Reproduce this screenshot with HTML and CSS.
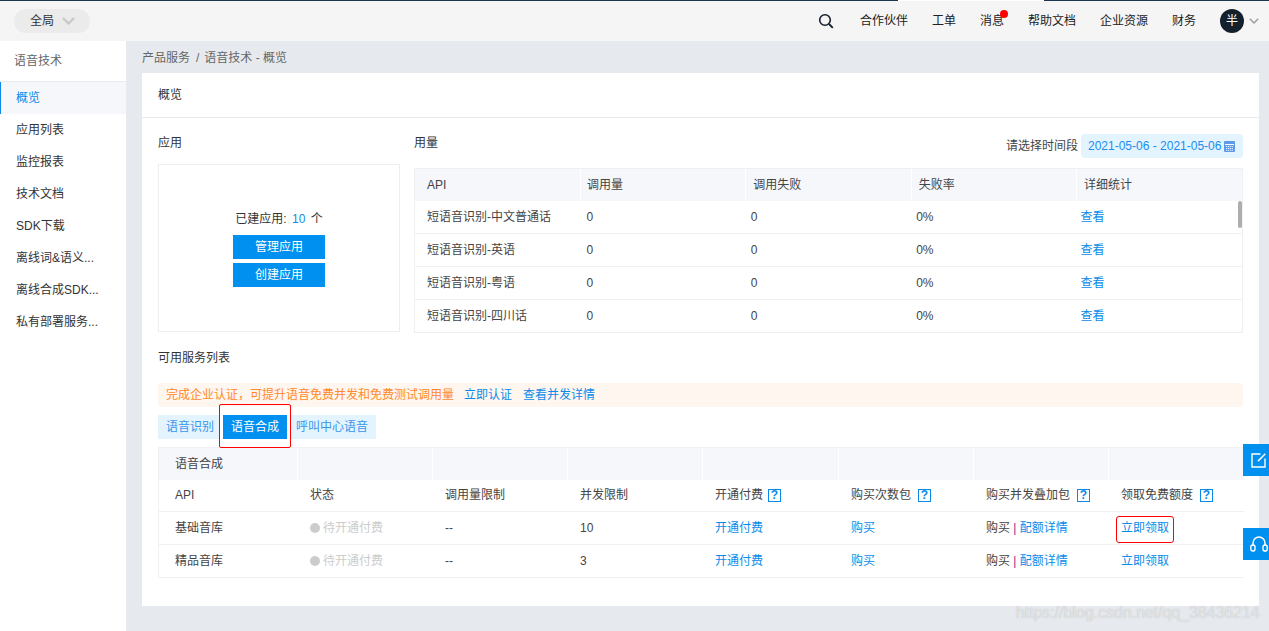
FILE: index.html
```html
<!DOCTYPE html>
<html lang="zh-CN">
<head>
<meta charset="utf-8">
<title>语音技术 - 概览</title>
<link rel="stylesheet" href="styles.css">
</head>
<body>
<div class="app">
  <header class="topbar">
    <div class="scope"><span>全局</span><svg class="scope-arrow" width="13" height="8" viewBox="0 0 13 8"><path d="M1 1l5.500 5.500L12 1" fill="none" stroke="#c9c9c9" stroke-width="2.400"/></svg></div>
    <nav class="topnav">
      <svg class="search" width="16" height="16" viewBox="0 0 16 16"><circle cx="7" cy="7" r="5.300" fill="none" stroke="#15202b" stroke-width="1.600"/><path d="M11 11l3.800 3.800" stroke="#15202b" stroke-width="1.800"/></svg>
      <a class="nav-link">合作伙伴</a>
      <a class="nav-link">工单</a>
      <a class="nav-link msg">消息<i class="dot"></i></a>
      <a class="nav-link">帮助文档</a>
      <a class="nav-link">企业资源</a>
      <a class="nav-link">财务</a>
      <div class="user"><span class="avatar">半</span><svg width="10" height="6" viewBox="0 0 10 6"><path d="M.8.800L5 5 9.200.800" fill="none" stroke="#9a9a9a" stroke-width="1.400"/></svg></div>
    </nav>
  </header>
  <div class="layout">
    <aside class="sidebar">
      <div class="side-title">语音技术</div>
      <ul class="side-menu">
        <li class="active">概览</li>
        <li>应用列表</li>
        <li>监控报表</li>
        <li>技术文档</li>
        <li>SDK下载</li>
        <li>离线词&amp;语义...</li>
        <li>离线合成SDK...</li>
        <li>私有部署服务...</li>
      </ul>
    </aside>
    <main class="main">
      <div class="crumb">产品服务<span class="sep">/</span>语音技术 - 概览</div>
      <section class="card">
        <h1 class="card-head">概览</h1>
        <div class="card-body">
          <div class="top-row">
            <div class="apps">
              <h2 class="sec-title">应用</h2>
              <div class="app-box">
                <p class="app-count">已建应用: <b>10</b> 个</p>
                <button class="btn">管理应用</button>
                <button class="btn">创建应用</button>
              </div>
            </div>
            <div class="usage">
              <div class="usage-head">
                <h2 class="sec-title">用量</h2>
                <div class="date-wrap">请选择时间段
                  <span class="date">2021-05-06 - 2021-05-06
                    <svg width="11" height="11" viewBox="0 0 11 11"><rect width="11" height="11" rx="1" fill="#5b9bea"/><path d="M1 3.500h9" stroke="#fff"/><path d="M2 5.500h7M2 7.500h7M2 9.300h7" stroke="#fff" stroke-width=".8" stroke-dasharray="1.400 .6"/></svg>
                  </span>
                </div>
              </div>
              <div class="usage-table">
                <table class="tbl">
                  <thead><tr><th>API</th><th>调用量</th><th>调用失败</th><th>失败率</th><th>详细统计</th></tr></thead>
                  <tbody>
                    <tr class="first"><td>短语音识别-中文普通话</td><td>0</td><td>0</td><td>0%</td><td><a>查看</a></td></tr>
                    <tr><td>短语音识别-英语</td><td>0</td><td>0</td><td>0%</td><td><a>查看</a></td></tr>
                    <tr><td>短语音识别-粤语</td><td>0</td><td>0</td><td>0%</td><td><a>查看</a></td></tr>
                    <tr><td>短语音识别-四川话</td><td>0</td><td>0</td><td>0%</td><td><a>查看</a></td></tr>
                  </tbody>
                </table>
                <i class="scroll-thumb"></i>
              </div>
            </div>
          </div>
          <h2 class="sec-title list-title">可用服务列表</h2>
          <div class="notice"><span class="warn">完成企业认证，可提升语音免费并发和免费测试调用量</span><a>立即认证</a><a>查看并发详情</a></div>
          <div class="tabs">
            <span class="tab first-tab">语音识别</span>
            <span class="tab on">语音合成</span>
            <span class="tab last-tab">呼叫中心语音</span>
          </div>
          <div class="svc">
            <table class="svc-tbl">
              <thead>
                <tr class="svc-head"><th>语音合成</th><th></th><th></th><th></th><th></th><th></th><th></th><th></th></tr>
              </thead>
              <tbody>
                <tr class="svc-cols"><td>API</td><td>状态</td><td>调用量限制</td><td>并发限制</td><td>开通付费<i class="q">?</i></td><td>购买次数包<i class="q">?</i></td><td>购买并发叠加包<i class="q">?</i></td><td>领取免费额度<i class="q">?</i></td></tr>
                <tr><td>基础音库</td><td class="off"><i class="off-dot"></i>待开通付费</td><td>--</td><td>10</td><td><a>开通付费</a></td><td><a>购买</a></td><td>购买 <em>|</em> <a>配额详情</a></td><td><a class="marked">立即领取</a></td></tr>
                <tr><td>精品音库</td><td class="off"><i class="off-dot"></i>待开通付费</td><td>--</td><td>3</td><td><a>开通付费</a></td><td><a>购买</a></td><td>购买 <em>|</em> <a>配额详情</a></td><td><a>立即领取</a></td></tr>
              </tbody>
            </table>
          </div>
        </div>
      </section>
    </main>
  </div>
  <a class="float edit"><svg width="15" height="15" viewBox="0 0 15 15"><path d="M9.500 1H1v13h13V5.500" fill="none" stroke="#fff" stroke-width="1.400"/><path d="M14.300.8L7 8.100" stroke="#fff" stroke-width="1.500"/></svg></a>
  <a class="float phone"><svg width="18" height="16" viewBox="0 0 18 16"><path d="M3 10V7a6 6 0 0 1 12 0v3" fill="none" stroke="#fff" stroke-width="1.500"/><rect x=".8" y="9" width="4.200" height="6" rx="2.100" fill="none" stroke="#fff" stroke-width="1.400"/><rect x="13" y="9" width="4.200" height="6" rx="2.100" fill="none" stroke="#fff" stroke-width="1.400"/></svg></a>
  <div class="watermark">https://blog.csdn.net/qq_38436214</div>
</div>
</body>
</html>
```
FILE: styles.css
```css
*, *::before, *::after { box-sizing: border-box; }
html, body { margin: 0; height: 100%; overflow: hidden; }
body { font: 12px/1.500 "Liberation Sans", "Noto Sans CJK SC", sans-serif; color: #333; }
h1, h2, p, ul { margin: 0; padding: 0; font-weight: normal; }
a { color: #0a8bea; }
i, em { font-style: normal; }
.app { position: relative; width: 1269px; height: 631px; overflow: hidden; background: #e6eaee; }

.topbar { position: relative; height: 41px; display: flex; align-items: center; justify-content: space-between; padding: 0 10px 0 14px; background: #f5f5f5; border-top: 1px solid #1c3552; }
.topbar::before { content: ""; position: absolute; left: 898px; top: -1px; width: 146px; height: 1px; background: #fff; }
.scope { width: 76px; height: 24px; display: flex; align-items: center; gap: 8px; padding-left: 16px; background: #ebebeb; border-radius: 12px; color: #333; }
.topnav { display: flex; align-items: center; }
.search { margin-right: 26px; }
.nav-link { position: relative; color: #222; margin-right: 24px; }
.dot { position: absolute; top: -2px; right: -4px; width: 8px; height: 8px; border-radius: 50%; background: #f00; }
.user { display: flex; align-items: center; gap: 5px; }
.avatar { width: 24px; height: 24px; display: flex; align-items: center; justify-content: center; border-radius: 50%; background: #14202c; color: #fff; }

.layout { display: flex; height: 590px; }
.sidebar { flex: none; width: 126px; background: #fff; }
.side-title { height: 41px; line-height: 40px; padding-left: 14px; color: #666; border-bottom: 1px solid #e8ebef; }
.side-menu { list-style: none; }
.side-menu li { height: 32px; line-height: 32px; padding-left: 16px; color: #333; }
.side-menu .active { color: #0a8bea; background: #f5f7fb; border-left: 1px solid #0a8bea; padding-left: 15px; }

.main { flex: 1; min-width: 0; padding-left: 16px; padding-right: 10px; }
.crumb { height: 32px; line-height: 35px; color: #666; }
.sep { margin: 0 5px 0 6px; }
.card { height: 533px; background: #fff; }
.card-head { height: 45px; line-height: 45px; padding-left: 16px; font-size: 12px; color: #333; border-bottom: 1px solid #e9ebee; }
.card-body { padding: 0 16px; }
.top-row { display: flex; gap: 14px; }
.sec-title { font-size: 12px; color: #333; }
.apps { width: 242px; padding-top: 16px; }
.app-box { height: 168px; margin-top: 12px; border: 1px solid #eee; display: flex; flex-direction: column; align-items: center; padding-top: 45px; }
.app-count { margin-bottom: 7px; color: #333; }
.app-count b { font-weight: normal; color: #0a8bea; margin: 0 2px; }
.btn { width: 92px; height: 24px; margin-bottom: 4px; border: 0; padding: 0; background: #0091f0; color: #fff; font: inherit; }
.usage { width: 829px; }
.usage-head { height: 50px; display: flex; justify-content: space-between; padding-top: 16px; }
.date-wrap { display: flex; align-items: flex-start; gap: 3px; color: #444; line-height: 24px; }
.date { width: 162px; height: 24px; display: flex; align-items: center; gap: 3px; padding-left: 7px; background: #e3f4ff; border-radius: 4px; color: #1a8cf0; }
.usage-table { position: relative; height: 165px; overflow: hidden; border: 1px solid #eef0f4; border-bottom-color: #eee; }
.tbl { width: 100%; border-collapse: collapse; table-layout: fixed; }
.tbl th { height: 32px; text-align: left; font-weight: normal; background: #f5f7fb; padding: 0 0 0 12px; border-right: 1px solid #fff; color: #444; }
.tbl th:nth-child(n+2) { padding-left: 7px; }
.tbl th:nth-child(2) { padding-left: 6px; }
.tbl th:last-child { border-right: 0; }
.tbl td { height: 33px; padding: 0 0 0 12px; border-bottom: 1px solid #eef0f4; color: #444; }
.tbl td:nth-child(2) { padding-left: 6px; }
.tbl td:nth-child(n+3) { padding-left: 5px; }
.tbl td:nth-child(5) { padding-left: 4px; }
.tbl .first td { height: 32px; }
.scroll-thumb { position: absolute; top: 32px; right: 0; width: 4px; height: 27px; border-radius: 2px; background: #adadad; }

.list-title { margin-top: 16px; }
.notice { height: 24px; margin-top: 16px; padding-left: 8px; display: flex; align-items: center; gap: 10px; background: #fff6f0; border-radius: 3px; }
.notice .warn { color: #ff8a2b; }
.notice a + a { margin-left: 1px; }
.tabs { display: flex; margin-top: 8px; height: 24px; }
.tab { line-height: 24px; background: #e3f4ff; color: #3a96ea; }
.first-tab { padding: 0 5px 0 8px; }
.last-tab { padding: 0 8px 0 5px; }
.tab.on { position: relative; width: 64px; margin: 0 4px; text-align: center; background: #0091f0; color: #fff; }
.tab.on::after { content: ""; position: absolute; left: -4px; top: -11px; width: 72px; height: 44px; border: 1px solid #f00; border-radius: 2px; }
.svc { width: 1086px; margin-top: 8px; border-left: 1px solid #eef0f4; border-top: 1px solid #eef0f4; }
.svc-tbl { width: 1085px; border-collapse: collapse; table-layout: fixed; }
.svc-head th { width: 135px; height: 32px; background: #f5f7fb; text-align: left; font-weight: normal; padding: 0 0 0 13px; border-right: 1px solid #fff; color: #444; }
.svc-head th:first-child { width: 138px; padding-left: 16px; }
.svc-head th:nth-child(5), .svc-head th:last-child { width: 136px; }
.svc-tbl td { height: 33px; padding: 0 0 0 13px; border-bottom: 1px solid #eef0f4; color: #444; white-space: nowrap; }
.svc-tbl td:first-child { padding-left: 16px; }
.svc-tbl .svc-cols td { height: 31px; }
.off { color: #ccc !important; }
.off-dot { display: inline-block; width: 10px; height: 10px; margin-right: 3px; border-radius: 50%; background: #ccc; vertical-align: -1px; }
.q { display: inline-block; width: 13px; height: 13px; margin-left: 7px; line-height: 11px; text-align: center; border: 1px solid #0a8bea; color: #0a8bea; font-weight: bold; }
.svc-cols td:nth-child(5) .q { margin-left: 5px; }
.svc em { color: #8e2a8e; }
.marked { position: relative; }
.marked::after { content: ""; position: absolute; left: -5px; top: -5px; width: 58px; height: 27px; border: 1px solid #f00; border-radius: 3px; }

.float { position: absolute; left: 1243px; width: 26px; height: 32px; display: flex; align-items: center; padding-left: 8px; background: #0091f0; overflow: hidden; }
.float svg { flex: none; }
.edit { top: 444px; }
.phone { top: 528px; padding-left: 7px; }
.watermark { position: absolute; left: 1016px; top: 602px; font-size: 15.900px; line-height: 22px; color: rgba(255, 255, 255, .6); text-shadow: 0 0 1px rgba(120, 120, 120, .5); white-space: nowrap; }
```
